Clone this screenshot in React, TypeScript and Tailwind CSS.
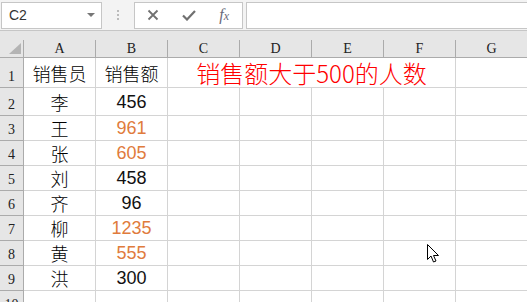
import React from 'react';

const cols = ['A', 'B', 'C', 'D', 'E', 'F', 'G'];

const rows = [
  { name: '李', amount: '456', hi: false },
  { name: '王', amount: '961', hi: true },
  { name: '张', amount: '605', hi: true },
  { name: '刘', amount: '458', hi: false },
  { name: '齐', amount: '96', hi: false },
  { name: '柳', amount: '1235', hi: true },
  { name: '黄', amount: '555', hi: true },
  { name: '洪', amount: '300', hi: false },
];

const cjk = { fontFamily: '"Noto Sans CJK SC", sans-serif' };
const num = { fontFamily: '"Liberation Sans", Arial, sans-serif' };
const serif = { fontFamily: '"Liberation Serif", "Times New Roman", serif' };

function RowHead({ n }: { n: number }) {
  return (
    <div
      className="flex items-end justify-center bg-[#e6e6e6] border-r border-b border-[#ababab] text-[14px] leading-none pb-[3px] text-[#222]"
      style={serif}
    >
      {n}
    </div>
  );
}

function Cell({ children, className = '' }: { children?: React.ReactNode; className?: string }) {
  return (
    <div className={`flex items-center justify-center border-r border-b border-[#d4d4d4] bg-white leading-none ${className}`}>
      {children}
    </div>
  );
}

function Toolbar() {
  return (
    <div className="flex h-[31px] items-center bg-[#f3f3f3] border-b border-[#c6c6c6] pl-[1px]">
      <div className="flex h-[27px] w-[101px] items-center justify-between border border-[#c6c6c6] bg-white pl-[7px] pr-[6px]">
        <span className="text-[14px] text-[#333]" style={num}>C2</span>
        <svg width="8" height="5" viewBox="0 0 8 5">
          <path d="M0 0 L8 0 L4 4 Z" fill="#777" />
        </svg>
      </div>
      <div className="flex w-[32px] flex-col items-center justify-center gap-[2px]">
        <span className="block h-[2px] w-[2px] bg-[#bbb]" />
        <span className="block h-[2px] w-[2px] bg-[#bbb]" />
        <span className="block h-[2px] w-[2px] bg-[#bbb]" />
      </div>
      <div className="flex h-[27px] w-[109px] items-center border border-[#c6c6c6] bg-white">
        <div className="flex w-[36px] justify-center">
          <svg width="12" height="12" viewBox="0 0 12 12">
            <path d="M1.5 1.5 L10.5 10.5 M10.5 1.5 L1.5 10.5" stroke="#707070" strokeWidth="1.8" />
          </svg>
        </div>
        <div className="flex w-[36px] justify-center">
          <svg width="14" height="11" viewBox="0 0 14 11">
            <path d="M1 5.5 L5 9.5 L13 1" stroke="#707070" strokeWidth="2.2" fill="none" />
          </svg>
        </div>
        <div className="flex w-[36px] justify-center">
          <span className="text-[16px] leading-none italic text-[#6a6a7a]" style={serif}>
            f<span className="text-[12px]">x</span>
          </span>
        </div>
      </div>
      <div className="ml-[3px] h-[27px] flex-1 border border-r-0 border-[#c6c6c6] bg-white" />
    </div>
  );
}

export default function App() {
  return (
    <div className="relative h-[302px] w-[527px] overflow-hidden bg-[#e6e6e6]">
      <Toolbar />
      <div className="h-[9px] bg-[#e6e6e6]" />
      <div className="grid grid-cols-[24px_72px_72px_72px_72px_72px_72px_72px] grid-rows-[18px_30px_28px_repeat(8,25px)]">
        <div className="relative bg-[#e6e6e6] border-r border-b border-[#ababab]">
          <svg className="absolute right-[2px] bottom-[3px]" width="12" height="11" viewBox="0 0 12 11">
            <path d="M12 0 L12 11 L0 11 Z" fill="#b4b4b4" />
          </svg>
        </div>
        {cols.map((c) => (
          <div
            key={c}
            className="flex items-center justify-center bg-[#e6e6e6] border-r border-b border-[#ababab] text-[14px] leading-none text-[#222]"
            style={serif}
          >
            {c}
          </div>
        ))}

        <RowHead n={1} />
        <Cell className="text-[18px] font-light text-black">
          <span style={cjk}>销售员</span>
        </Cell>
        <Cell className="text-[18px] font-light text-black">
          <span style={cjk}>销售额</span>
        </Cell>
        <Cell className="col-span-4 text-[24px] font-light text-[#ff0000]">
          <span style={cjk}>销售额大于500的人数</span>
        </Cell>
        <Cell />

        {rows.map((r, i) => (
          <React.Fragment key={r.name}>
            <RowHead n={i + 2} />
            <Cell className="text-[18px] font-light text-black">
              <span style={cjk}>{r.name}</span>
            </Cell>
            <Cell className={`text-[18px] ${r.hi ? 'text-[#e07b3c]' : 'text-[#111]'}`}>
              <span style={num}>{r.amount}</span>
            </Cell>
            <Cell />
            <Cell />
            <Cell />
            <Cell />
            <Cell />
          </React.Fragment>
        ))}

        <RowHead n={10} />
        <Cell />
        <Cell />
        <Cell />
        <Cell />
        <Cell />
        <Cell />
        <Cell />
      </div>

      <svg className="absolute left-[427px] top-[244px]" width="14" height="20" viewBox="0 0 14 20">
        <path
          d="M0.5 0.5 L0.5 15.5 L4 12 L6.5 18 L9 17 L6.5 11.5 L11.5 11.5 Z"
          fill="white"
          stroke="black"
          strokeWidth="1"
        />
      </svg>
    </div>
  );
}
